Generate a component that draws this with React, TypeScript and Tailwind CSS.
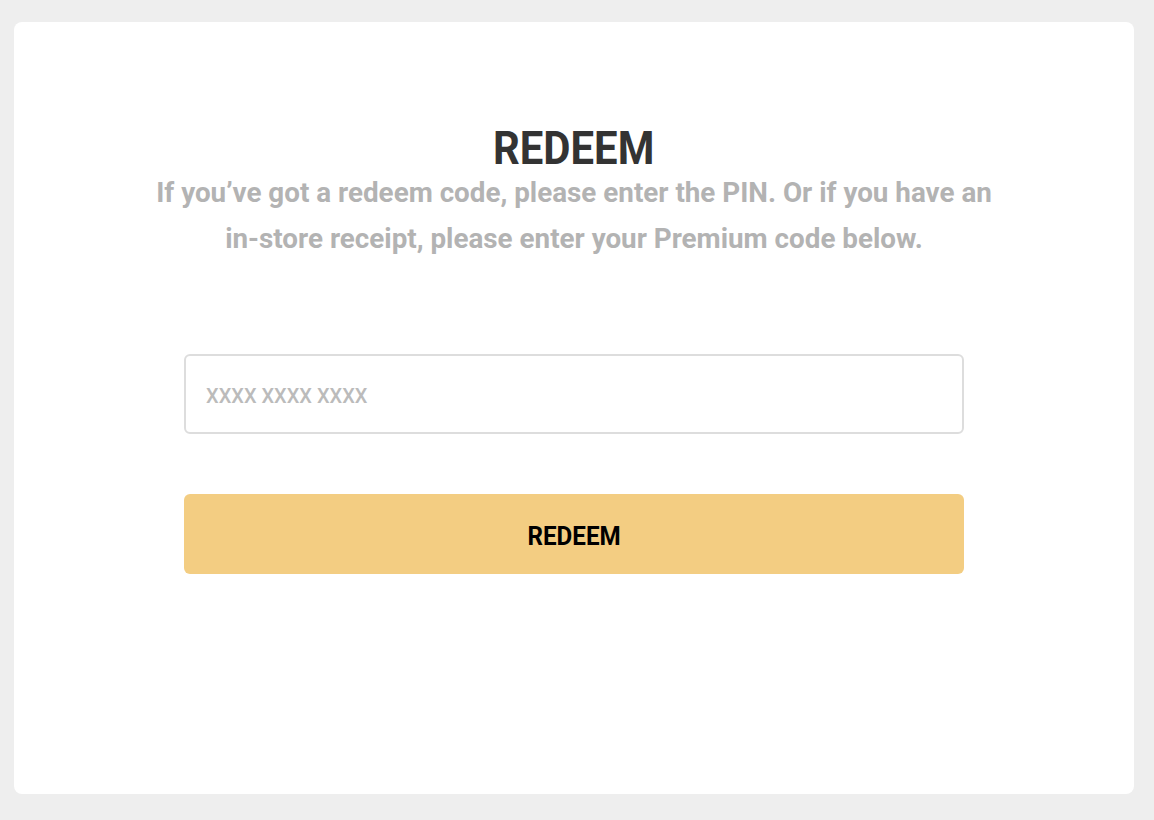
export default function App() {
  return (
    <div className="min-h-screen bg-[#eeeeee] pl-[14px] pr-[20px] pt-[22px] pb-[26px] font-['Roboto','Liberation_Sans',sans-serif]">
      <div className="bg-white rounded-lg h-[772px] flex flex-col items-center pt-[98px]">
        <h1 className="text-[46px] leading-[56px] font-bold text-[#333333] scale-x-[0.91]">
          REDEEM
        </h1>
        <p className="mt-[-6px] text-center text-[27.8px] leading-[46px] font-bold text-[#b3b3b3]">
          If you’ve got a redeem code, please enter the PIN. Or if you have an
          <br />
          in-store receipt, please enter your Premium code below.
        </p>

        <form className="mt-[92px] w-[780px] flex flex-col gap-[60px]">
          <input
            type="text"
            placeholder="XXXX XXXX XXXX"
            className="h-[80px] w-full rounded-md border-2 border-[#dddddd] px-[20px] pt-[4px] text-[20px] font-medium outline-none placeholder-[#bbbbbb]"
          />
          <button
            type="button"
            className="h-[80px] w-full rounded-md bg-[#f3cd82] flex items-center justify-center pt-[4px]"
          >
            <span className="text-[26px] font-bold text-black scale-x-[0.93]">REDEEM</span>
          </button>
        </form>
      </div>
    </div>
  );
}
